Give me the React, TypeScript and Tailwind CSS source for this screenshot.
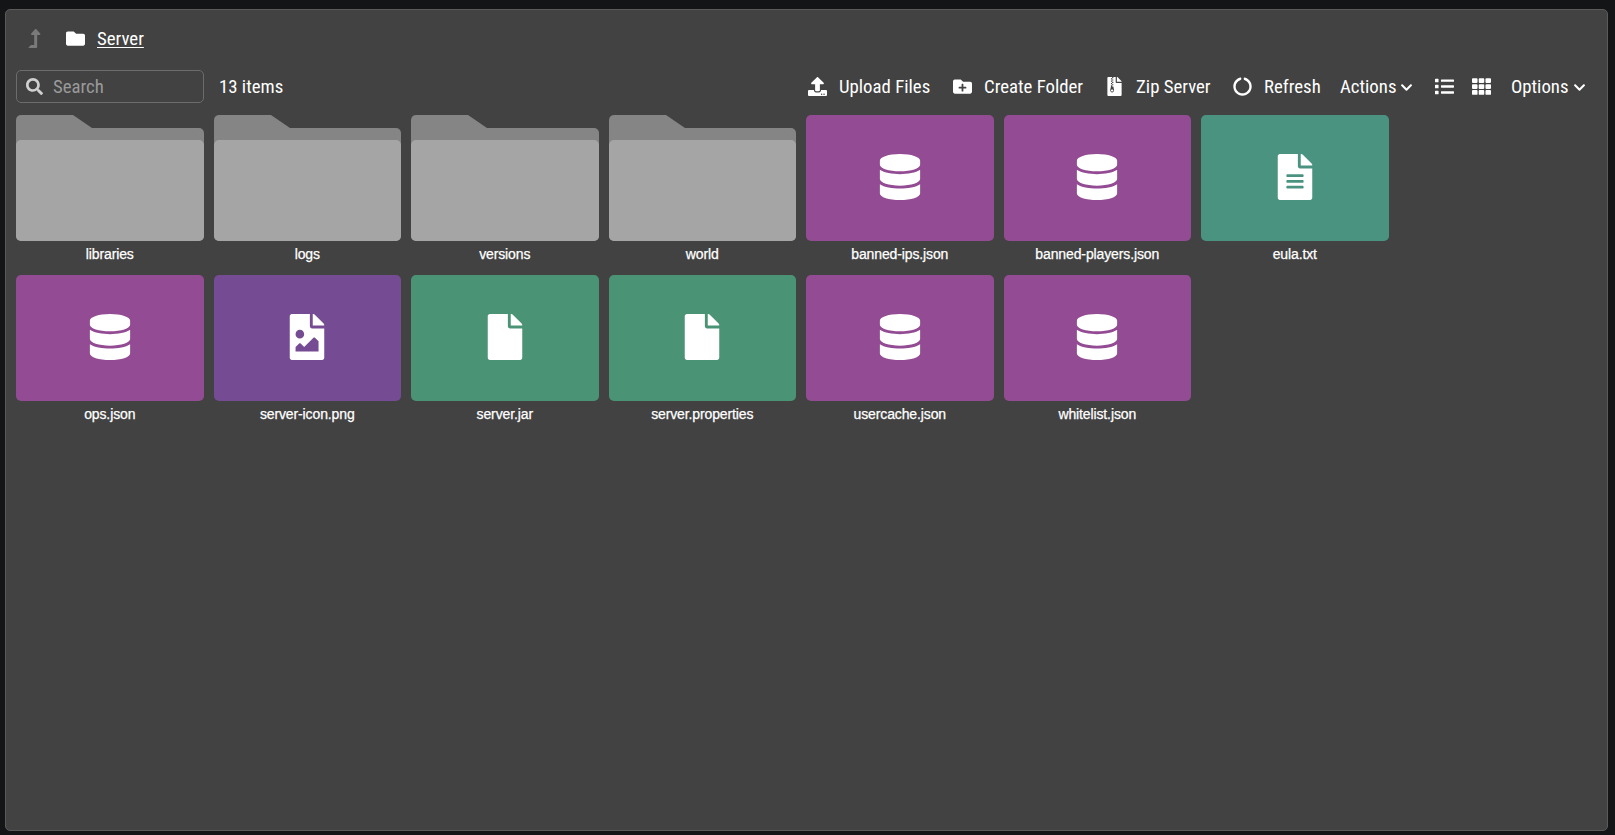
import type { ReactNode } from "react";
import type { IconType } from "react-icons";
import {
  FaChevronDown,
  FaCircleNotch,
  FaDatabase,
  FaFile,
  FaFileAlt,
  FaFileArchive,
  FaFileImage,
  FaFolder,
  FaFolderPlus,
  FaLevelUpAlt,
  FaList,
  FaSearch,
  FaTh,
  FaUpload,
} from "react-icons/fa";

type Entry = {
  name: string;
  icon?: IconType;
  color?: string;
};

const entries: Entry[] = [
  { name: "libraries" },
  { name: "logs" },
  { name: "versions" },
  { name: "world" },
  { name: "banned-ips.json", icon: FaDatabase, color: "bg-[#934b93]" },
  { name: "banned-players.json", icon: FaDatabase, color: "bg-[#934b93]" },
  { name: "eula.txt", icon: FaFileAlt, color: "bg-[#4b9381]" },
  { name: "ops.json", icon: FaDatabase, color: "bg-[#934b93]" },
  { name: "server-icon.png", icon: FaFileImage, color: "bg-[#754b93]" },
  { name: "server.jar", icon: FaFile, color: "bg-[#4b9375]" },
  { name: "server.properties", icon: FaFile, color: "bg-[#4b9375]" },
  { name: "usercache.json", icon: FaDatabase, color: "bg-[#934b93]" },
  { name: "whitelist.json", icon: FaDatabase, color: "bg-[#934b93]" },
];

function FolderShape() {
  return (
    <div className="flex h-[126px] flex-col">
      <svg className="block h-[13px] w-[76px] fill-[#858585]" viewBox="0 0 76 13">
        <path d="M0 13V5.500Q0 0 5.500 0H57L76 13Z" />
      </svg>
      <div className="flex-1 rounded-tr-[5px] rounded-b-[5px] bg-[#858585] pt-3">
        <div className="h-full rounded-[5px] bg-[#a5a5a5]" />
      </div>
    </div>
  );
}

function Tile({ name, icon: Icon, color }: Entry) {
  return (
    <div className="h-[150px] w-[187.5px]">
      {Icon ? (
        <div className={`flex h-[126px] items-center justify-center rounded-[5px] pb-0.5 ${color}`}>
          <Icon className="size-[46px] text-white" />
        </div>
      ) : (
        <FolderShape />
      )}
      <div className="pt-[5px] text-center font-['Liberation_Sans',Arial,sans-serif] text-[14px] leading-4 tracking-[-0.12px] text-white [-webkit-text-stroke:0.25px_white]">
        {name}
      </div>
    </div>
  );
}

function ToolButton({ icon: Icon, width, children }: { icon: IconType; width: string; children: ReactNode }) {
  return (
    <div className={`flex items-center ${width}`}>
      <Icon className="mr-3 size-[19px]" />
      <span className="pt-0.5 whitespace-nowrap">{children}</span>
    </div>
  );
}

export default function App() {
  return (
    <div className="h-[835px] w-[1615px] bg-[#141517] pt-[9px] pl-[5px]">
      <div className="h-[822px] w-[1603px] rounded-[5px] border border-[#5a5a5a] bg-[#424242] px-2.5 font-['Roboto_Condensed',Roboto,sans-serif] text-[18.8px] text-white [font-stretch:condensed]">
        {/* Breadcrumbs */}
        <div className="flex h-[60px] items-center pb-1">
          <FaLevelUpAlt className="ml-[9px] size-[19px] text-[#7a7a7a]" />
          <FaFolder className="ml-[22px] size-[19px]" />
          <span className="ml-3 pt-0.5 underline underline-offset-2">Server</span>
        </div>

        {/* Toolbar */}
        <div className="flex h-[33px] items-center">
          <div className="flex h-[33px] w-[188px] items-center rounded-[5px] border border-[#6c6c6c] pl-[9px]">
            <FaSearch className="size-[17px] text-[#d0d0d0]" />
            <span className="ml-2.5 pt-0.5 text-[#9a9a9a]">Search</span>
          </div>
          <span className="ml-[15px] pt-0.5">13 items</span>
          <div className="ml-auto flex h-[33px] items-center pb-px">
            <ToolButton icon={FaUpload} width="w-[145px]">Upload Files</ToolButton>
            <ToolButton icon={FaFolderPlus} width="w-[152px]">Create Folder</ToolButton>
            <ToolButton icon={FaFileArchive} width="w-[128px]">Zip Server</ToolButton>
            <ToolButton icon={FaCircleNotch} width="w-[107px]">Refresh</ToolButton>
            <div className="flex w-[95px] items-center">
              <span className="pt-0.5">Actions</span>
              <FaChevronDown className="mt-0.5 ml-1 size-[13px]" />
            </div>
            <FaList className="mr-[18px] size-[19px]" />
            <FaTh className="mr-[20px] size-[19px]" />
            <div className="flex w-[86px] items-center">
              <span className="pt-0.5">Options</span>
              <FaChevronDown className="mt-0.5 ml-1 size-[13px]" />
            </div>
          </div>
        </div>

        {/* Files */}
        <div className="flex flex-wrap gap-2.5 pt-3 pr-[180px]">
          {entries.map((entry) => (
            <Tile key={entry.name} {...entry} />
          ))}
        </div>
      </div>
    </div>
  );
}
